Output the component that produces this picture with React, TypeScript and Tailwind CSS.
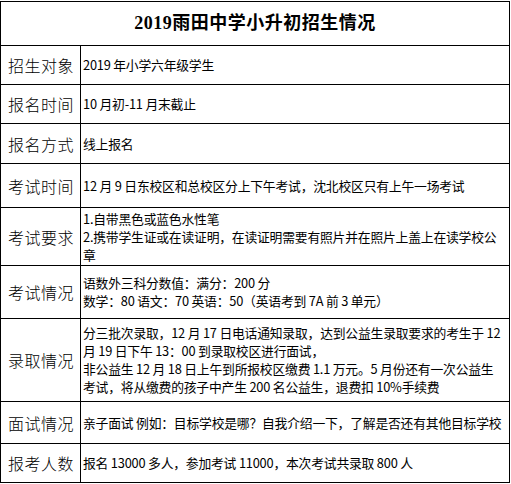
const rows: { label: string; h: string; lines: string[] }[] = [
  { label: '招生对象', h: 'h-[39px]', lines: ['2019 年小学六年级学生'] },
  { label: '报名时间', h: 'h-[39px]', lines: ['10 月初-11 月末截止'] },
  { label: '报名方式', h: 'h-[40px]', lines: ['线上报名'] },
  { label: '考试时间', h: 'h-[44px]', lines: ['12 月 9 日东校区和总校区分上下午考试，沈北校区只有上午一场考试'] },
  {
    label: '考试要求',
    h: 'h-[58px]',
    lines: ['1.自带黑色或蓝色水性笔', '2.携带学生证或在读证明，在读证明需要有照片并在照片上盖上在读学校公', '章'],
  },
  {
    label: '考试情况',
    h: 'h-[53px]',
    lines: ['语数外三科分数值：满分：200 分', '数学：80 语文：70 英语：50（英语考到 7A 前 3 单元）'],
  },
  {
    label: '录取情况',
    h: 'h-[83px]',
    lines: [
      '分三批次录取，12 月 17 日电话通知录取，达到公益生录取要求的考生于 12',
      '月 19 日下午 13：00 到录取校区进行面试，',
      '非公益生 12 月 18 日上午到所报校区缴费 1.1 万元。5 月份还有一次公益生',
      '考试，将从缴费的孩子中产生 200 名公益生，退费扣 10%手续费',
    ],
  },
  { label: '面试情况', h: 'h-[42px]', lines: ['亲子面试 例如：目标学校是哪？自我介绍一下，了解是否还有其他目标学校'] },
  { label: '报考人数', h: 'h-[38px]', lines: ['报名 13000 多人，参加考试 11000，本次考试共录取 800 人'] },
];

export default function App() {
  return (
    <div className="w-[511px] h-[484px] bg-white pt-[1px] font-['Noto_Sans_CJK_SC',sans-serif] text-black">
      <div className="w-[510px] border border-black flex flex-col">
        {/* Title */}
        <div className="h-[44px] border-b border-black flex items-center justify-center">
          <span className="text-[18px] font-bold font-['Liberation_Serif','Noto_Sans_CJK_SC',serif] tracking-[0.5px]">
            2019雨田中学小升初招生情况
          </span>
        </div>

        {rows.map((r, i) => (
          <div
            key={r.label}
            className={`${r.h} flex ${i < rows.length - 1 ? 'border-b border-black' : ''}`}
          >
            <div className="w-[80px] shrink-0 border-r border-black flex items-center pl-[7px] text-[16px] font-light tracking-[0.5px]">
              {r.label}
            </div>
            <div className="flex-1 flex flex-col justify-center pl-[2px] text-[12.8px] leading-[18px] tracking-[-0.2px] whitespace-nowrap overflow-hidden">
              {r.lines.map((l) => (
                <div key={l}>{l}</div>
              ))}
            </div>
          </div>
        ))}
      </div>
    </div>
  );
}
